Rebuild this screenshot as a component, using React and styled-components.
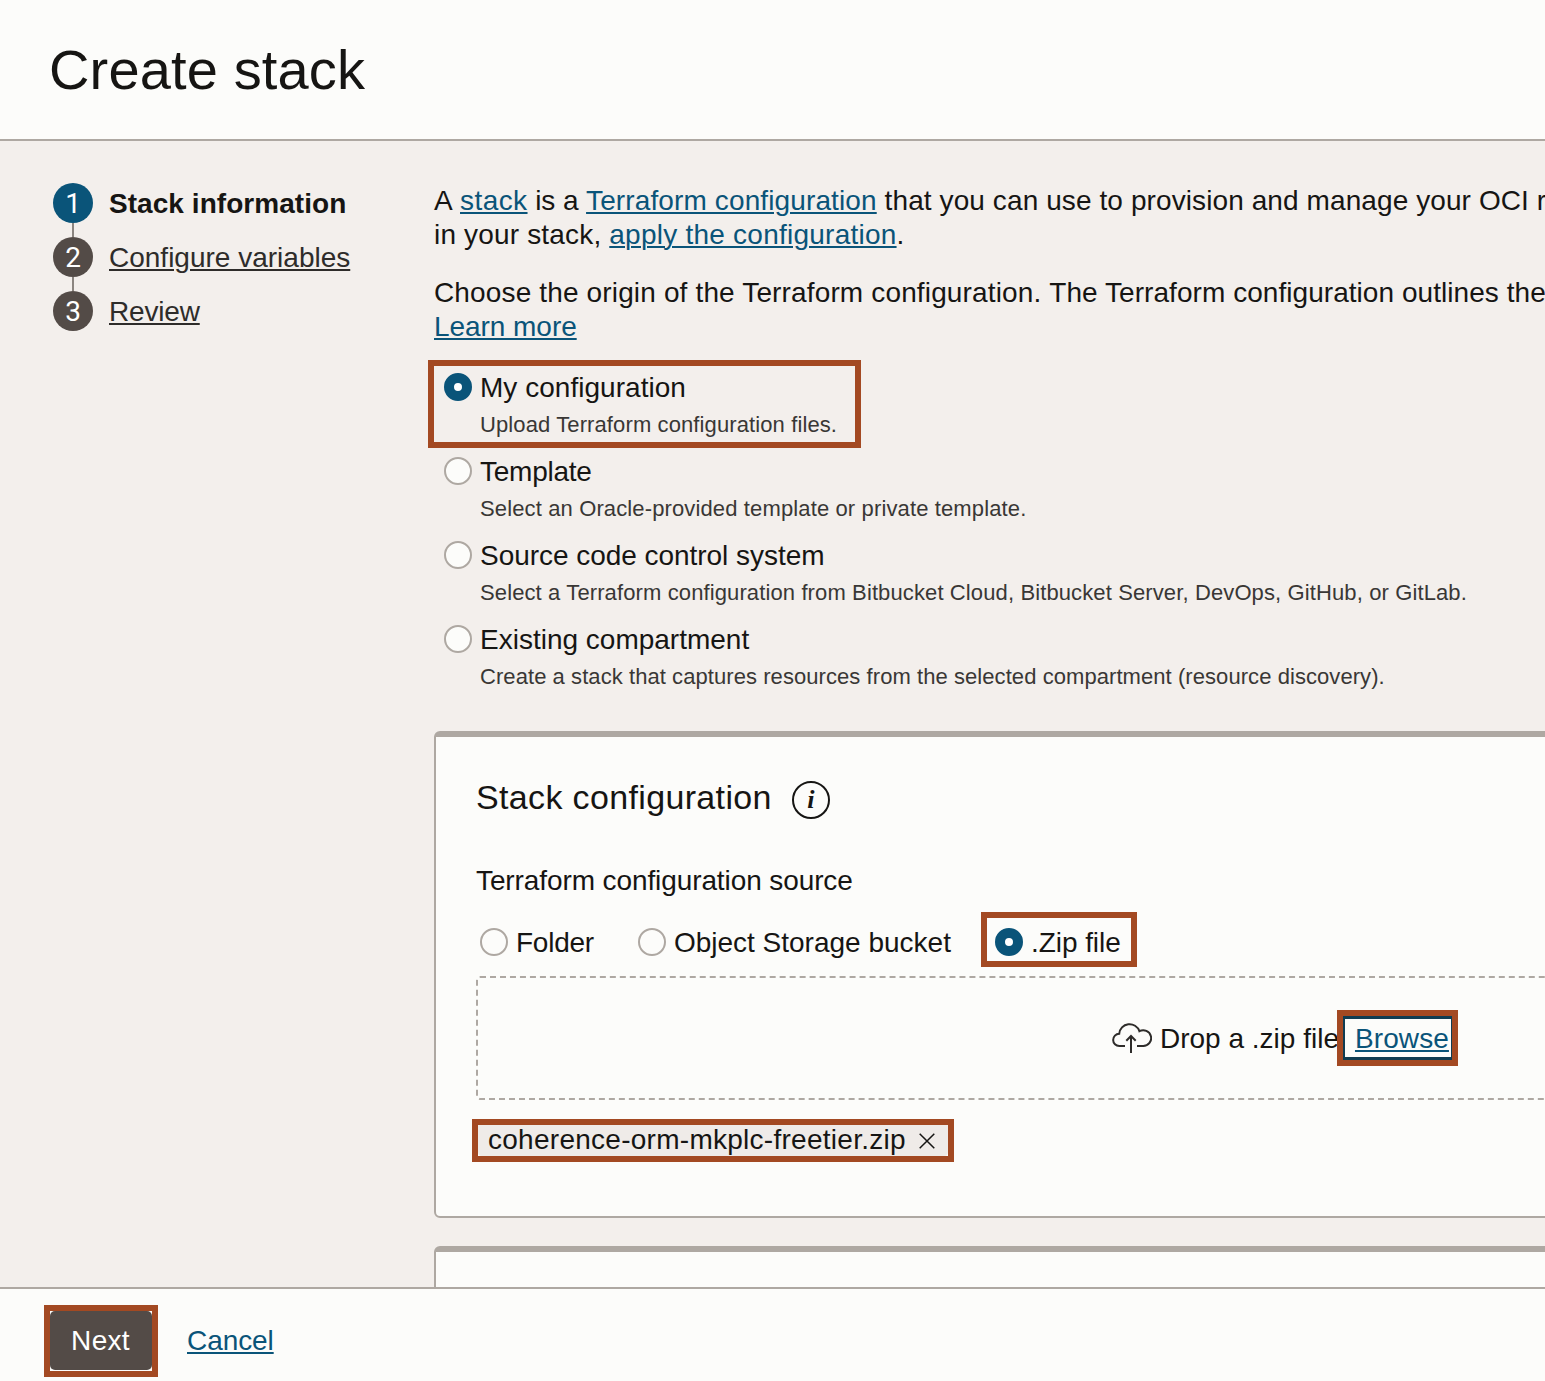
import React from "react";
import styled, { createGlobalStyle, css } from "styled-components";

const c = {
  text: "#161513", sub: "#393735", link: "#0a5479", bg: "#f3efec", panel: "#fcfcfa",
  line: "#aea8a2", dark: "#534b47", mark: "#a34922",
};

const Global = createGlobalStyle`
  *, *::before, *::after { box-sizing: border-box; }
  html, body { margin: 0; height: 100%; overflow: hidden; }
  body { font-family: "Liberation Sans", Arial, sans-serif; font-size: 28px; line-height: 34px; color: ${c.text}; background: ${c.bg}; }
  p, h1, h2, ol, ul { margin: 0; padding: 0; font-weight: 400; }
`;
const underline = css`
  text-decoration: underline;
  text-decoration-thickness: 2px;
  text-underline-offset: 2px;
`;
const tracking = css`letter-spacing: ${(p) => p.$ls || 0}px;`;

const Page = styled.div`display: flex; flex-direction: column; height: 1381px; overflow: hidden;`;
const Header = styled.header`
  height: 141px; flex: none; padding: 38px 49px 0; background: ${c.panel}; border-bottom: 2px solid ${c.line};
`;
const Title = styled.h1`font-size: 56px; line-height: 64px; ${tracking}`;
const Body = styled.div`display: flex; flex: 1; min-height: 0; overflow: hidden;`;
const Steps = styled.ol`width: 434px; flex: none; list-style: none; padding: 42px 0 0 53px;`;
const Step = styled.li`
  display: flex; flex-direction: column; height: 54px;
  &:last-child { height: 40px; }
`;
const StepRow = styled.div`display: flex; align-items: center; gap: 16px; height: 40px; flex: none;`;
const StepDot = styled.span`
  width: 40px; height: 40px; border-radius: 50%; background: ${(p) => (p.$active ? c.link : c.dark)};
  color: #fff; display: flex; align-items: center; justify-content: center; font-family: Roboto, sans-serif;
  padding-top: 1px;
`;
const Connector = styled.span`width: 2px; height: 14px; margin-left: 19px; background: #8b8580;`;
const StepLabel = styled.span`
  padding-top: 2px;
  ${tracking}
  ${(p) => (p.$active ? css`font-weight: 700;` : css`${underline} color: #2e2c2a;`)}
`;
const Main = styled.main`flex: none; width: 1700px; padding-top: 43px;`;
const Para = styled.p`white-space: nowrap; margin-bottom: 24px;`;
const Link = styled.a`color: ${c.link}; ${underline} ${tracking}`;
const Txt = styled.span`${tracking}`;
const Options = styled.ul`list-style: none; margin-top: -3px; padding-left: 10px;`;
const Option = styled.li`display: flex; gap: 8px; height: 84px; padding-top: 8px; position: relative; width: max-content;`;
const Radio = styled.span`
  width: 28px; height: 28px; flex: none; border-radius: 50%; background: ${(p) => (p.$on ? "#fff" : c.panel)};
  border: ${(p) => (p.$on ? `10px solid ${c.link}` : `2px solid ${c.line}`)};
`;
const OptionText = styled.div`display: flex; flex-direction: column; gap: 6px; margin-top: -2px; white-space: nowrap;`;
const Hint = styled.span`font-size: 22px; line-height: 28px; color: ${c.sub}; ${tracking}`;
const Marker = styled.span`
  position: absolute; border: 6px solid ${c.mark}; pointer-events: none;
  inset: ${(p) => p.$inset};
`;
const Panel = styled.section`
  background: ${c.panel}; border: 2px solid ${c.line}; border-top-width: 6px; border-radius: 6px;
  height: 487px; margin-top: 30px; padding: 42px 40px 0;
  & + & { margin-top: 28px; }
`;
const PanelHead = styled.div`display: flex; align-items: center; gap: 20px; height: 42px;`;
const PanelTitle = styled.h2`font-size: 34px; line-height: 40px; padding-bottom: 6px; ${tracking}`;
const Info = styled.span`
  width: 38px; height: 38px; border: 2px solid ${c.text}; border-radius: 50%; display: flex; align-items: center;
  justify-content: center; font: italic 700 26px/34px "Liberation Serif", serif;
`;
const FieldLabel = styled.p`margin-top: 43px; ${tracking}`;
const RadioRow = styled.div`display: flex; gap: 44px; margin-top: 24px; padding-left: 4px;`;
const RadioText = styled.span`padding-top: 2px; ${tracking}`;
const Inline = styled.label`display: flex; align-items: center; gap: 8px; height: 40px; position: relative;`;
const DropZone = styled.div`
  border: 2px dashed ${c.line}; border-radius: 4px; height: 124px; margin-top: 14px; padding-left: 634px;
  display: flex; align-items: center;
`;
const Cloud = styled.svg`width: 40px; height: 34px; margin-right: 8px; flex: none;`;
const DropText = styled.div`display: flex; padding-top: 2px;`;
const Browse = styled.span`position: relative; margin-left: 16px;`;
const Focus = styled.span`
  position: absolute; inset: -6px -3px -4px -12px; border: solid #0f3c52; border-width: 3px 1px 3px 2px;
`;
const Chip = styled.div`
  position: relative; display: flex; align-items: center; gap: 13px; width: 470px; height: 31px; margin: 25px 0 0 2px;
  padding-left: 10px; background: #efebe8; border-radius: 0 0 4px 4px;
`;
const ChipText = styled.span`padding-bottom: 2px; ${tracking}`;
const Footer = styled.footer`
  height: 94px; flex: none; background: ${c.panel}; border-top: 2px solid ${c.line};
  display: flex; align-items: flex-start; gap: 35px; padding: 22px 50px 0;
`;
const Button = styled.button`
  position: relative; width: 102px; height: 59px; border: 0; border-radius: 5px; background: ${c.dark}; color: #fff;
  font: inherit; padding: 0 1px 0 0; ${tracking}
`;
const CancelWrap = styled.span`display: flex; align-items: center; height: 59px;`;

const options = [
  { label: "My configuration", ls: 0.03, hint: "Upload Terraform configuration files.", hls: 0.11, on: true },
  { label: "Template", ls: -0.25, hint: "Select an Oracle-provided template or private template.", hls: 0.13 },
  {
    label: "Source code control system", ls: -0.04,
    hint: "Select a Terraform configuration from Bitbucket Cloud, Bitbucket Server, DevOps, GitHub, or GitLab.", hls: 0.117,
  },
  {
    label: "Existing compartment", ls: 0,
    hint: "Create a stack that captures resources from the selected compartment (resource discovery).", hls: 0.067,
  },
];

export default function App() {
  return (
    <Page>
      <Global />
      <Header><Title $ls={0.15}>Create stack</Title></Header>
      <Body>
        <Steps>
          <Step><StepRow><StepDot $active>1</StepDot><StepLabel $active $ls={0.05}>Stack information</StepLabel></StepRow><Connector /></Step>
          <Step><StepRow><StepDot>2</StepDot><StepLabel>Configure variables</StepLabel></StepRow><Connector /></Step>
          <Step><StepRow><StepDot>3</StepDot><StepLabel $ls={-0.18}>Review</StepLabel></StepRow></Step>
        </Steps>
        <Main>
          <Para>
            <Txt $ls={0.55}>A </Txt><Link $ls={0.43}>stack</Link><Txt $ls={-0.1}> is a </Txt>
            <Link $ls={0.12}>Terraform configuration</Link>
            <Txt $ls={0.095}> that you can use to provision and manage your OCI r</Txt><br />
            <Txt $ls={0.17}>in your stack, </Txt><Link $ls={0.24}>apply the configuration</Link>.
          </Para>
          <Para>
            <Txt $ls={0.146}>Choose the origin of the Terraform configuration. </Txt>
            <Txt $ls={0.05}>The Terraform configuration outlines the</Txt><br />
            <Link $ls={-0.05}>Learn more</Link>
          </Para>
          <Options>
            {options.map((o) => (
              <Option key={o.label}>
                <Radio $on={o.on} />
                <OptionText><Txt $ls={o.ls}>{o.label}</Txt><Hint $ls={o.hls}>{o.hint}</Hint></OptionText>
                {o.on && <Marker $inset="-5px -24px 1px -16px" />}
              </Option>
            ))}
          </Options>
          <Panel>
            <PanelHead><PanelTitle $ls={0.35}>Stack configuration</PanelTitle><Info>i</Info></PanelHead>
            <FieldLabel $ls={-0.1}>Terraform configuration source</FieldLabel>
            <RadioRow>
              <Inline><Radio /><RadioText $ls={-0.25}>Folder</RadioText></Inline>
              <Inline><Radio /><RadioText>Object Storage bucket</RadioText></Inline>
              <Inline><Radio $on /><RadioText $ls={-0.05}>.Zip file</RadioText><Marker $inset="-10px -16px -5px -14px" /></Inline>
            </RadioRow>
            <DropZone>
              <Cloud viewBox="0 0 40 34" fill="none" stroke="#2e2c2a" strokeWidth="2">
                <path d="M13 25H7.3A6.1 6.1 0 0 1 7.2 12.8A10.4 10.4 0 0 1 27.4 10.2A7.9 7.9 0 1 1 31.2 25H25M19 32V15M14.3 19.7L19 15L23.7 19.7" />
              </Cloud>
              <DropText>
                <Txt>Drop a .zip file</Txt>
                <Browse><Link $ls={0.1}>Browse</Link><Focus /><Marker $inset="-12px -9px -10px -18px" /></Browse>
              </DropText>
            </DropZone>
            <Chip>
              <ChipText $ls={0.27}>coherence-orm-mkplc-freetier.zip</ChipText>
              <svg width="16" height="16" viewBox="0 0 16 16" stroke={c.text} strokeWidth="1.5"><path d="M.7.7l14.6 14.6M15.3.7L.7 15.3" /></svg>
              <Marker $inset="-6px" />
            </Chip>
          </Panel>
          <Panel />
        </Main>
      </Body>
      <Footer>
        <Button $ls={0.3}>Next<Marker $inset="-6px -6px -7px" /></Button>
        <CancelWrap><Link $ls={-0.08}>Cancel</Link></CancelWrap>
      </Footer>
    </Page>
  );
}
